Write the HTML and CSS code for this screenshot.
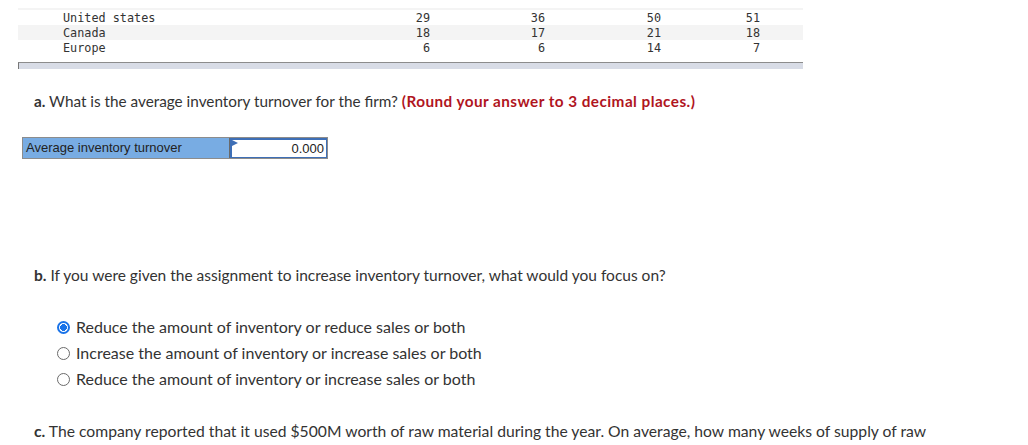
FILE: index.html
```html
<!DOCTYPE html>
<html>
<head>
<meta charset="utf-8">
<link rel="stylesheet" href="styles.css">
</head>
<body>
<div class="data">
  <div class="row partial"><span class="lbl">(in millions of units)</span></div>
  <div class="sep"></div>
  <div class="row"><span class="lbl">United states</span><span class="n">29</span><span class="n">36</span><span class="n">50</span><span class="n">51</span><span></span></div>
  <div class="row alt"><span class="lbl">Canada</span><span class="n">18</span><span class="n">17</span><span class="n">21</span><span class="n">18</span><span></span></div>
  <div class="row"><span class="lbl">Europe</span><span class="n">6</span><span class="n">6</span><span class="n">14</span><span class="n">7</span><span></span></div>
  <div class="scrollbar"></div>
</div>

<p class="q qa"><b>a.</b> What is the average inventory turnover for the firm? <strong class="hint">(Round your answer to 3 decimal places.)</strong></p>

<div class="answer">
  <div class="answer-label">Average inventory turnover</div>
  <div class="answer-input">0.000</div>
</div>

<p class="q qb"><b>b.</b> If you were given the assignment to increase inventory turnover, what would you focus on?</p>

<div class="options">
  <label class="opt"><span class="radio checked"></span>Reduce the amount of inventory or reduce sales or both</label>
  <label class="opt"><span class="radio"></span>Increase the amount of inventory or increase sales or both</label>
  <label class="opt"><span class="radio"></span>Reduce the amount of inventory or increase sales or both</label>
</div>

<p class="q qc"><b>c.</b> The company reported that it used $500M worth of raw material during the year. On average, how many weeks of supply of raw material did the firm have on hand? <strong class="hint">(Use 52 weeks per year. Round your answer to 2 decimal places.)</strong></p>
</body>
</html>
```
FILE: styles.css
```css
html, body { margin: 0; padding: 0; background: #fff; }
body {
  font-family: Lato, "Open Sans", Arial, sans-serif;
  color: #333;
  overflow: hidden;
}
.data {
  margin-left: 18px;
  width: 785px;
  font-family: "DejaVu Sans Mono", "Liberation Mono", monospace;
  font-size: 11.8px;
  color: #333;
}
.row {
  display: grid;
  grid-template-columns: 362px 50px 115px 116px 99px 43px;
  height: 15px;
  line-height: 17px;
}
.row.alt { background: #f4f4f4; }
.row.partial { height: 8px; overflow: hidden; line-height: 15px; }
.row.partial .lbl { margin-top: -12px; display: block; }
.sep { height: 2px; background: #f4f4f4; }
.lbl { padding-left: 45px; white-space: nowrap; }
.n { text-align: right; }
.scrollbar {
  margin-top: 7px;
  height: 6px;
  background: #d8dce6;
  border-top: 1px solid #8c8c8c;
  border-left: 1px solid #777;
}
.q {
  margin: 0;
  padding-left: 34px;
  font-size: 15.3px;
  line-height: 20px;
}
.q b { font-weight: 700; color: #333; }
.hint { color: #b0151e; font-weight: 700; letter-spacing: 0.45px; }
.qa { margin-top: 22px; }
.answer {
  display: flex;
  margin: 26px 0 0 22px;
  width: 306px;
  height: 22px;
  border: 1px solid #8c8c8c;
  box-sizing: border-box;
  font-family: "Liberation Sans", Arial, sans-serif;
  font-size: 13px;
}
.answer-label {
  width: 207px;
  background: #78ace3;
  color: #222;
  padding-left: 3px;
  line-height: 20px;
  border-right: 1px solid #6a6a6a;
  box-sizing: border-box;
}
.answer-input {
  position: relative;
  flex: 1;
  background: #fff;
  border: 2px solid #3e6fb6;
  border-right-width: 1px;
  border-bottom-width: 1px;
  text-align: right;
  padding-right: 2px;
  line-height: 17px;
  color: #222;
}
.answer-input::before {
  content: "";
  position: absolute;
  left: 0;
  top: 0;
  border-left: 6px solid #3e6fb6;
  border-top: 3px solid transparent;
  border-bottom: 3px solid transparent;
}
.qb { margin-top: 106px; font-size: 15.5px; }
.options {
  margin: 32px 0 0 57px;
  display: flex;
  flex-direction: column;
  gap: 6px;
}
.opt {
  display: flex;
  align-items: center;
  font-size: 16px;
  line-height: 20px;
  color: #333;
}
.radio {
  width: 13px;
  height: 13px;
  border: 1px solid #6b6b6b;
  border-radius: 50%;
  box-sizing: border-box;
  margin-right: 6px;
  background: #fff;
}
.radio.checked {
  border: 2px solid #1a73e8;
  background: radial-gradient(circle, #1a73e8 0 3.2px, #fff 3.6px);
}
.qc { margin-top: 32px; padding-right: 80px; font-size: 15.7px; }
```
